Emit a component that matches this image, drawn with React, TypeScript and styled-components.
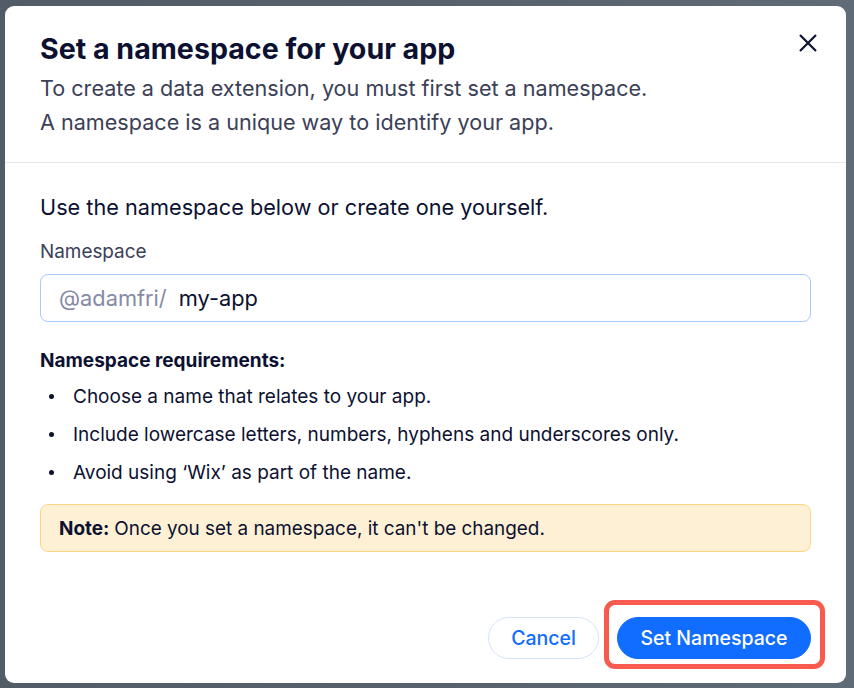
import React from "react";
import styled, { createGlobalStyle } from "styled-components";

const GlobalStyle = createGlobalStyle`
  html, body { margin: 0; padding: 0; }
  body {
    background: #56616c;
    font-family: Inter, "Noto Sans", "Liberation Sans", sans-serif;
    -webkit-font-smoothing: antialiased;
  }
  * { box-sizing: border-box; }
`;

const Backdrop = styled.div`
  width: 854px;
  height: 688px;
  display: flex;
  padding: 6px 8px 5px 5px;
  background: linear-gradient(90deg, #515c67 0%, #56616c 50%, #5f6b77 100%);
`;

const Modal = styled.div`
  flex: 1;
  display: flex;
  flex-direction: column;
  background: #ffffff;
  border-radius: 9px;
  overflow: hidden;
`;

const Header = styled.header`
  display: flex;
  align-items: flex-start;
  justify-content: space-between;
  padding: 27px 26px 0 35px;
  height: 157px;
  border-bottom: 1px solid #e3e8ef;
`;

const HeaderText = styled.div`
  display: flex;
  flex-direction: column;
`;

const Title = styled.h1`
  margin: 0;
  font-size: 28.6px;
  line-height: 32px;
  font-weight: 700;
  color: #0c1131;
`;

const Subtitle = styled.p`
  margin: 6px 0 0;
  font-size: 21.6px;
  line-height: 34px;
  color: #3b4057;
`;

const CloseButton = styled.button`
  border: none;
  background: none;
  padding: 0;
  margin-top: -2px;
  width: 24px;
  height: 24px;
  display: flex;
  align-items: center;
  justify-content: center;
  color: #0c1131;
  cursor: pointer;
`;

const Body = styled.section`
  flex: 1;
  display: flex;
  flex-direction: column;
  padding: 30px 35px 0;
`;

const Lead = styled.p`
  margin: 0;
  font-size: 21.7px;
  line-height: 28px;
  color: #0c1131;
`;

const Label = styled.label`
  margin-top: 19px;
  font-size: 18.9px;
  line-height: 24px;
  color: #3b4057;
`;

const InputBox = styled.div`
  margin-top: 10px;
  height: 48px;
  display: flex;
  align-items: center;
  padding: 0 18px;
  border: 1px solid #a9c9fb;
  border-radius: 8px;
  font-size: 21.8px;
`;

const Prefix = styled.span`
  color: #868aa5;
  margin-right: 12px;
`;

const Value = styled.span`
  color: #0c1131;
`;

const ReqTitle = styled.h2`
  margin: 27px 0 0;
  font-size: 19px;
  line-height: 24px;
  font-weight: 700;
  color: #0c1131;
`;

const ReqList = styled.ul`
  margin: 4px 0 0;
  padding: 0;
  list-style: none;
`;

const ReqItem = styled.li`
  display: flex;
  align-items: center;
  height: 38px;
  font-size: 19px;
  color: #0c1131;
  &::before {
    content: "";
    width: 5px;
    height: 5px;
    border-radius: 50%;
    background: #0c1131;
    margin: 0 19px 0 9px;
  }
`;

const Note = styled.div`
  margin-top: 13px;
  height: 48px;
  display: flex;
  align-items: center;
  padding: 0 18px;
  background: #fdf0d4;
  border: 1px solid #fcd685;
  border-radius: 8px;
  font-size: 18.9px;
  color: #0c1131;
  b { font-weight: 700; margin-right: 5px; }
`;

const Footer = styled.footer`
  display: flex;
  justify-content: flex-end;
  align-items: center;
  gap: 18px;
  padding: 0 35px 24px;
`;

const PillButton = styled.button<{ $primary?: boolean }>`
  height: 42px;
  border-radius: 21px;
  padding: 0 ${(p) => (p.$primary ? "22.5px" : "22px")};
  font-family: inherit;
  font-size: 19.5px;
  font-weight: 500;
  cursor: pointer;
  border: 1px solid ${(p) => (p.$primary ? "#116dff" : "#d5e4fc")};
  background: ${(p) => (p.$primary ? "#116dff" : "#ffffff")};
  color: ${(p) => (p.$primary ? "#ffffff" : "#116dff")};
`;

const Highlighted = styled.div`
  position: relative;
  display: flex;
`;

const HighlightRing = styled.span`
  position: absolute;
  top: -17px;
  bottom: -10px;
  left: -13px;
  right: -14px;
  border: 5px solid #f85a4d;
  border-radius: 11px;
  pointer-events: none;
`;

export default function App() {
  return (
    <>
      <GlobalStyle />
      <Backdrop>
        <Modal>
          <Header>
            <HeaderText>
              <Title>Set a namespace for your app</Title>
              <Subtitle>
                To create a data extension, you must first set a namespace.
                <br />
                A namespace is a unique way to identify your app.
              </Subtitle>
            </HeaderText>
            <CloseButton aria-label="Close">
              <svg width="20" height="20" viewBox="0 0 20 20" fill="none">
                <path d="M2 2L18 18M18 2L2 18" stroke="currentColor" strokeWidth="2.2" strokeLinecap="butt" />
              </svg>
            </CloseButton>
          </Header>
          <Body>
            <Lead>Use the namespace below or create one yourself.</Lead>
            <Label>Namespace</Label>
            <InputBox>
              <Prefix>@adamfri/</Prefix>
              <Value>my-app</Value>
            </InputBox>
            <ReqTitle>Namespace requirements:</ReqTitle>
            <ReqList>
              <ReqItem>Choose a name that relates to your app.</ReqItem>
              <ReqItem>Include lowercase letters, numbers, hyphens and underscores only.</ReqItem>
              <ReqItem>Avoid using ‘Wix’ as part of the name.</ReqItem>
            </ReqList>
            <Note>
              <b>Note:</b> Once you set a namespace, it can't be changed.
            </Note>
          </Body>
          <Footer>
            <PillButton>Cancel</PillButton>
            <Highlighted>
              <PillButton $primary>Set Namespace</PillButton>
              <HighlightRing />
            </Highlighted>
          </Footer>
        </Modal>
      </Backdrop>
    </>
  );
}
